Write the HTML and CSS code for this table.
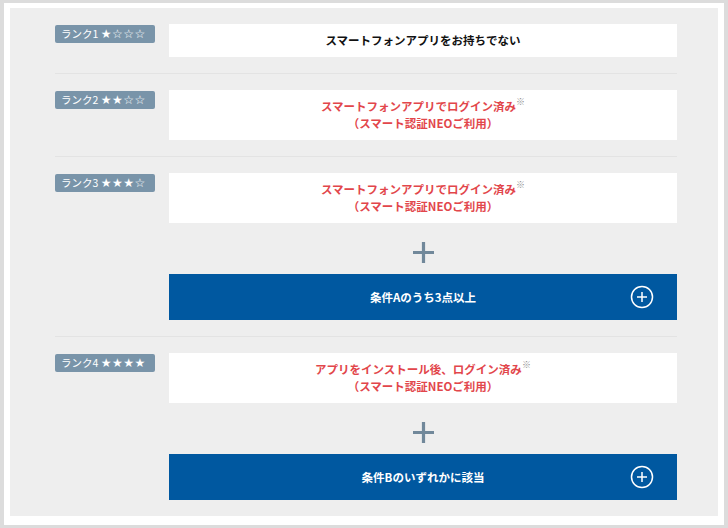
FILE: index.html
```html
<!DOCTYPE html>
<html lang="ja">
<head>
<meta charset="utf-8">
<link rel="stylesheet" href="styles.css">
</head>
<body>
<div class="frame">
  <div class="panel">
    <div class="row">
      <div class="badge">ランク1 <span class="stars">★☆☆☆</span></div>
      <div class="content">
        <div class="box box-black">スマートフォンアプリをお持ちでない</div>
      </div>
    </div>
    <div class="row">
      <div class="badge">ランク2 <span class="stars">★★☆☆</span></div>
      <div class="content">
        <div class="box box-red">スマートフォンアプリでログイン済み<sup class="note">※</sup><br>（スマート認証NEOご利用）</div>
      </div>
    </div>
    <div class="row">
      <div class="badge">ランク3 <span class="stars">★★★☆</span></div>
      <div class="content">
        <div class="box box-red">スマートフォンアプリでログイン済み<sup class="note">※</sup><br>（スマート認証NEOご利用）</div>
        <div class="plus">
          <svg width="21" height="21" viewBox="0 0 21 21"><path d="M10.5 0v21M0 10.5h21" stroke="#71889a" stroke-width="3.2"/></svg>
        </div>
        <div class="bar">条件Aのうち3点以上
          <svg class="circle" width="24" height="24" viewBox="0 0 24 24"><circle cx="12" cy="12" r="10.5" fill="none" stroke="#fff" stroke-width="1.5"/><path d="M12 7v10M7 12h10" stroke="#fff" stroke-width="1.5"/></svg>
        </div>
      </div>
    </div>
    <div class="row">
      <div class="badge">ランク4 <span class="stars">★★★★</span></div>
      <div class="content">
        <div class="box box-red">アプリをインストール後、ログイン済み<sup class="note">※</sup><br>（スマート認証NEOご利用）</div>
        <div class="plus">
          <svg width="21" height="21" viewBox="0 0 21 21"><path d="M10.5 0v21M0 10.5h21" stroke="#71889a" stroke-width="3.2"/></svg>
        </div>
        <div class="bar">条件Bのいずれかに該当
          <svg class="circle" width="24" height="24" viewBox="0 0 24 24"><circle cx="12" cy="12" r="10.5" fill="none" stroke="#fff" stroke-width="1.5"/><path d="M12 7v10M7 12h10" stroke="#fff" stroke-width="1.5"/></svg>
        </div>
      </div>
    </div>
  </div>
</div>
</body>
</html>
```
FILE: styles.css
```css
* { box-sizing: border-box; }
html, body { margin: 0; padding: 0; }
body {
  width: 728px;
  height: 528px;
  background: #dcdcdc;
  padding: 3px 4px;
  font-family: "Noto Sans CJK JP", "Noto Sans", sans-serif;
}
.frame {
  background: #fff;
  height: 522px;
  padding: 5px 6px 6px 6px;
}
.panel {
  background: #eeeeee;
  height: 508px;
  padding: 0 41px 0 45px;
}
.row {
  display: flex;
  align-items: flex-start;
  padding: 16px 0;
  border-bottom: 1px solid #e3e3e3;
}
.row:last-child { border-bottom: none; }
.badge {
  width: 100px;
  height: 18px;
  margin-top: 1px;
  margin-right: 14px;
  flex: none;
  background: #7994a9;
  border-radius: 2px;
  color: #fff;
  font-size: 10.5px;
  line-height: 18px;
  padding-left: 6px;
  white-space: nowrap;
}
.stars {
  font-family: "DejaVu Sans", sans-serif;
  font-size: 12px;
  letter-spacing: 0.5px;
}
.content { flex: 1; }
.box {
  background: #fff;
  text-align: center;
  font-weight: 700;
  font-size: 11.5px;
  line-height: 17px;
  padding: 8px 0;
}
.box-black { color: #111; }
.box-red { color: #e2464b; }
.note {
  color: #8e8e8e;
  font-size: 9px;
  font-weight: 700;
  vertical-align: top;
  line-height: 10px;
  position: relative;
  top: -1px;
}
.plus {
  display: flex;
  justify-content: center;
  padding: 19px 0 11px;
  height: 51px;
}
.bar {
  position: relative;
  height: 46px;
  background: #0058a0;
  color: #fff;
  font-weight: 700;
  font-size: 11.5px;
  display: flex;
  align-items: center;
  justify-content: center;
}
.circle {
  position: absolute;
  right: 23px;
  top: 11px;
}
```
